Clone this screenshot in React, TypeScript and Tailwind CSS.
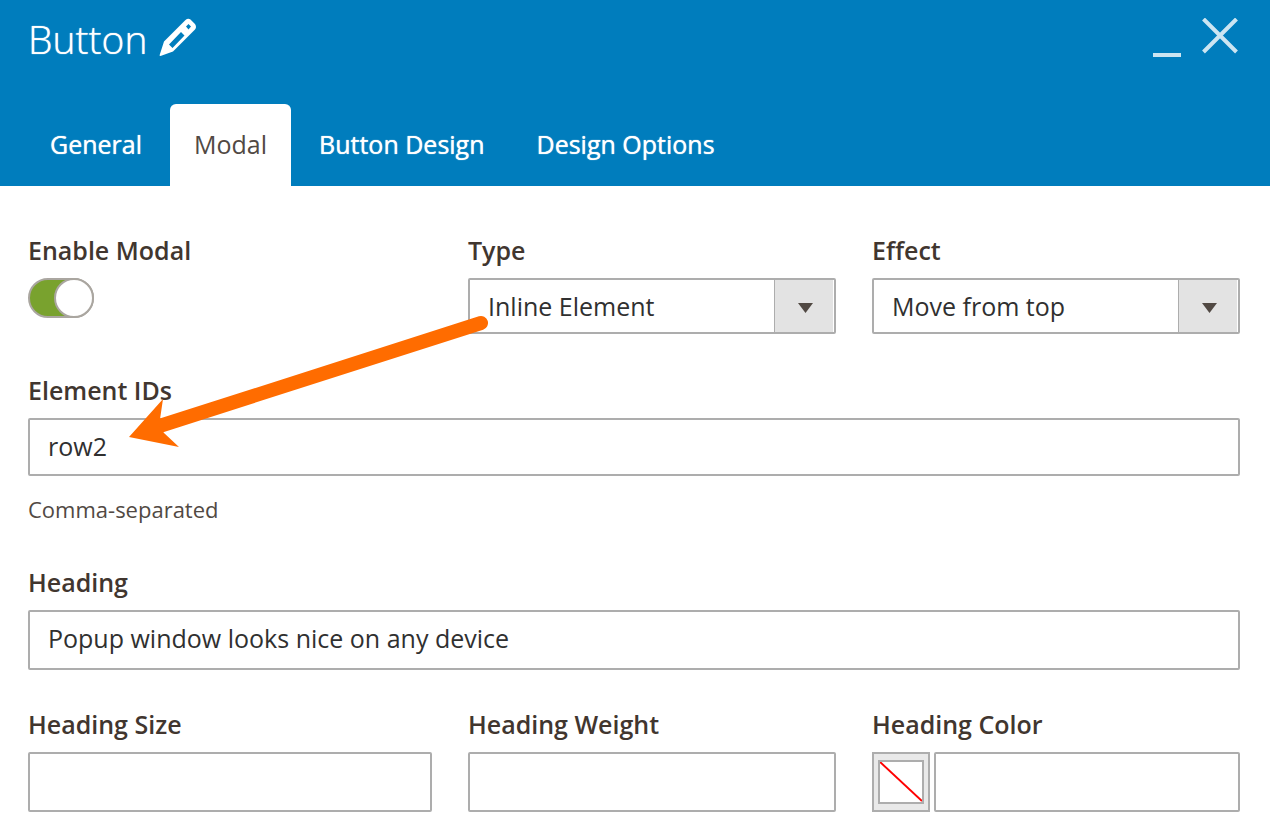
import { useState } from "react";
import type { ReactNode } from "react";

const tabs = ["General", "Modal", "Button Design", "Design Options"];

const boxClass =
  "w-full min-w-0 rounded-[2px] border-2 border-[#adadad] bg-white px-[18px] text-[25px] leading-9 text-[#303030] outline-none focus:border-[#007bdb]";

function Field({ id, label, children }: { id: string; label: string; children: ReactNode }) {
  return (
    <div className="flex min-w-0 flex-col items-start gap-3">
      <label htmlFor={id} className="text-[25px] leading-8 font-semibold text-[#41362f]">
        {label}
      </label>
      {children}
    </div>
  );
}

function SelectBox({ id, options }: { id: string; options: string[] }) {
  return (
    <div className="grid h-14 w-full grid-cols-[minmax(0,1fr)_62px]">
      <select id={id} className={`${boxClass} col-span-2 col-start-1 row-start-1 h-14 appearance-none`}>
        {options.map((o) => (
          <option key={o}>{o}</option>
        ))}
      </select>
      <span className="pointer-events-none z-10 col-start-2 row-start-1 my-[2px] mr-[3px] flex items-center justify-center border-l border-[#adadad] bg-[#e3e3e3] pt-1 pl-0.5">
        <svg width="15" height="10" viewBox="0 0 15 10" aria-hidden="true">
          <path d="M0 0H15L7.5 10Z" fill="#514943" />
        </svg>
      </span>
    </div>
  );
}

export default function App() {
  const [active, setActive] = useState("Modal");
  return (
    <div className="min-h-screen bg-white font-['Open_Sans',sans-serif]">
      <header className="flex flex-col bg-[#007dbd] text-white">
        <div className="flex h-[104px] items-start justify-between pt-3 pr-8 pl-7">
          <div className="flex items-center gap-3">
            <h1 className="text-[39px] leading-[54px] font-light [text-shadow:0_0_1px_#fff]">Button</h1>
            <button type="button" aria-label="Edit title" className="pb-1">
              <svg width="38" height="38" viewBox="0 0 38 38" aria-hidden="true">
                <path
                  fill="#fff"
                  fillRule="evenodd"
                  d="M0.500 37.500L5 23.500L26.500 2Q29 0 31.500 1.500L36 6Q38 9 36 11.500L14 33.500L1.500 38ZM10 26.500L13.500 30L25.500 17.500L22 14ZM29.500 6L27 8.500L29.500 11.500L32 8.500Z"
                />
              </svg>
            </button>
          </div>
          <div className="flex items-start gap-[21px] pt-1.5">
            <button type="button" aria-label="Minimize">
              <svg width="28" height="40" viewBox="0 0 28 40" aria-hidden="true">
                <path d="M0 37H28" stroke="#cce5f2" strokeWidth="4" />
              </svg>
            </button>
            <button type="button" aria-label="Close">
              <svg width="36" height="36" viewBox="0 0 36 36" aria-hidden="true">
                <path d="M1.500 1L34.500 34M34.500 1L1.500 34" stroke="#cce5f2" strokeWidth="4" />
              </svg>
            </button>
          </div>
        </div>
        <nav role="tablist" className="flex gap-1 px-[26px]">
          {tabs.map((t) => (
            <button
              key={t}
              type="button"
              role="tab"
              aria-selected={t === active}
              onClick={() => setActive(t)}
              className={`h-[82px] rounded-t-md px-6 pb-0.5 text-[25px] leading-9 ${
                t === active ? "bg-white text-[#514943]" : "text-white [text-shadow:0_0_1px_#fff]"
              }`}
            >
              {t}
            </button>
          ))}
        </nav>
      </header>

      <main className="relative flex flex-col gap-10 pt-12 pr-[30px] pb-7 pl-7">
        <div className="grid grid-cols-[404fr_368fr_368fr] gap-9">
          <Field id="enable" label="Enable Modal">
            <span className="grid h-10 w-[66px]">
              <input
                id="enable"
                type="checkbox"
                role="switch"
                defaultChecked
                className="peer col-start-1 row-start-1 h-10 w-[66px] appearance-none rounded-full border-2 border-[#aaa6a0] bg-white checked:bg-[#79a22e]"
              />
              <span className="pointer-events-none col-start-1 row-start-1 size-10 rounded-full border-2 border-[#aaa6a0] bg-white peer-checked:justify-self-end" />
            </span>
          </Field>
          <Field id="type" label="Type">
            <SelectBox id="type" options={["Inline Element"]} />
          </Field>
          <Field id="effect" label="Effect">
            <SelectBox id="effect" options={["Move from top"]} />
          </Field>
        </div>

        <div className="flex flex-col gap-5">
          <Field id="ids" label="Element IDs">
            <input id="ids" type="text" defaultValue="row2" className={`${boxClass} h-[58px] pb-0.5`} />
          </Field>
          <p className="pb-1 text-[22px] leading-[26px] text-[#514943]">Comma-separated</p>
        </div>

        <div className="flex flex-col gap-[38px]">
          <Field id="heading" label="Heading">
            <input
              id="heading"
              type="text"
              defaultValue="Popup window looks nice on any device"
              className={`${boxClass} h-[60px] pb-1`}
            />
          </Field>
          <div className="grid grid-cols-[404fr_368fr_368fr] gap-9">
            <Field id="size" label="Heading Size">
              <input id="size" type="text" className={`${boxClass} h-[60px]`} />
            </Field>
            <Field id="weight" label="Heading Weight">
              <input id="weight" type="text" className={`${boxClass} h-[60px]`} />
            </Field>
            <Field id="color" label="Heading Color">
              <div className="flex w-full gap-1">
                <button
                  type="button"
                  aria-label="Pick color"
                  className="flex h-[60px] w-[58px] shrink-0 items-center justify-center border-2 border-[#adadad] bg-[#e9e9e9]"
                >
                  <span className="border-2 border-[#adadad] bg-white">
                    <svg width="42" height="40" viewBox="0 0 42 40" aria-hidden="true">
                      <path d="M0 0L42 39" stroke="#f00" strokeWidth="2" />
                    </svg>
                  </span>
                </button>
                <input id="color" type="text" className={`${boxClass} h-[60px]`} />
              </div>
            </Field>
          </div>
        </div>

        <svg
          className="pointer-events-none absolute top-[128px] left-32"
          width="364"
          height="136"
          viewBox="0 0 364 136"
          aria-hidden="true"
        >
          <path d="M353 9L30 112.500" stroke="#ff6c00" strokeWidth="14" strokeLinecap="round" />
          <path d="M1 123L35 85L31 112L36 119L51 133Z" fill="#ff6c00" />
        </svg>
      </main>
    </div>
  );
}
